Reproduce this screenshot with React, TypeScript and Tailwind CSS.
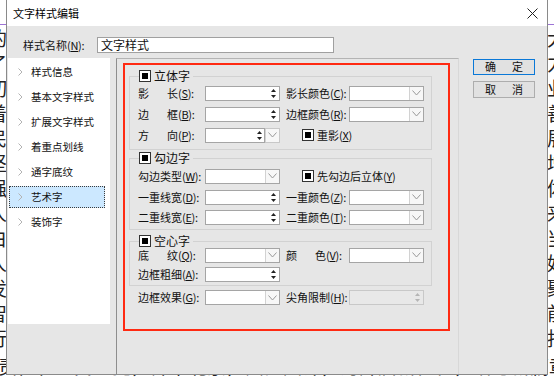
import React from 'react';

const FONT = "font-['Noto_Sans_CJK_SC','Noto_Sans',sans-serif]";

// 对话框两侧露出的文档文字
const EDGE_LINES: [string, string][] = [
  ['的', '大'],
  ['了', '力'],
  ['切', '业'],
  ['着', '善'],
  ['民', '展'],
  ['坚', '增'],
  ['强', '体'],
  ['人', '来'],
  ['白', '当'],
  ['人', '好'],
  ['发', '聚'],
  ['智', '前'],
  ['行', '托'],
];
const LAST_LINE = '责任和人民重托，齐聚北京，共商大计，为开启新征程，谱写新篇章贡献智慧，献良策，家';

function Key({ k, colon = true }: { k: string; colon?: boolean }) {
  return (
    <span className="tracking-[-0.3px]">
      (<span className="underline underline-offset-1">{k}</span>){colon ? ':' : ''}
    </span>
  );
}

function Check({ label, k }: { label: string; k?: string }) {
  return (
    <div className="flex items-center gap-[3px] whitespace-nowrap">
      <div className="flex h-[12px] w-[12px] items-center justify-center border border-[#333] bg-white">
        <div className="h-[6px] w-[6px] bg-black" />
      </div>
      <span>
        {label}
        {k && <Key k={k} colon={false} />}
      </span>
    </div>
  );
}

function SpinArrows({ dim }: { dim?: boolean }) {
  const c = dim ? '#b5b5b5' : '#222';
  return (
    <svg width="7" height="11" viewBox="0 0 7 11" className="shrink-0">
      <path d="M3.5 1 L6 4 L1 4 Z" fill={c} />
      <path d="M3.5 10 L6 7 L1 7 Z" fill={c} />
    </svg>
  );
}

function DropArrow() {
  return (
    <div className="flex h-full w-[14px] shrink-0 items-center justify-center border-l border-[#d2d2d2] bg-[#f7f7f7]">
      <svg width="9" height="6" viewBox="0 0 9 6">
        <polyline points="0.5,0.5 4.5,5 8.5,0.5" fill="none" stroke="#9a9a9a" strokeWidth="1" />
      </svg>
    </div>
  );
}

function Spin({ disabled }: { disabled?: boolean }) {
  return (
    <div
      className={`flex h-[15px] w-[75px] shrink-0 items-center border ${
        disabled ? 'border-[#c8c8c8] bg-[#e8e8e8]' : 'border-[#a5a5a5] bg-white'
      }`}
    >
      <div className="flex-1" />
      <div className="mr-[2px] flex items-center">
        <SpinArrows dim={disabled} />
      </div>
    </div>
  );
}

function Combo() {
  return (
    <div className="flex h-[15px] w-[75px] shrink-0 items-center border border-[#a5a5a5] bg-white">
      <div className="flex-1" />
      <DropArrow />
    </div>
  );
}

function SpinCombo() {
  return (
    <div className="flex h-[15px] w-[75px] shrink-0 items-center">
      <div className="flex h-full flex-1 items-center border border-[#a5a5a5] bg-white">
        <div className="flex-1" />
        <div className="mr-[1px]">
          <SpinArrows />
        </div>
      </div>
      <div className="h-full border-y border-r border-[#c8c8c8]">
        <DropArrow />
      </div>
    </div>
  );
}

function Label({ a, b, k, w = 67 }: { a: string; b?: string; k: string; w?: number }) {
  return (
    <div className="flex shrink-0 items-center whitespace-nowrap" style={{ width: w }}>
      {b ? (
        <>
          <span>{a}</span>
          <span className="ml-[18px]">
            {b}
            <Key k={k} />
          </span>
        </>
      ) : (
        <span>
          {a}
          <Key k={k} />
        </span>
      )}
    </div>
  );
}

function Group({
  title,
  k,
  children,
  className = '',
}: {
  title: string;
  k?: string;
  children: React.ReactNode;
  className?: string;
}) {
  return (
    <div className={`relative ml-[4px] w-[303px] border border-[#d2d2d2] pl-[8px] ${className}`}>
      <div className="absolute -top-[8px] left-[9px] flex h-[14px] items-center bg-[#e6e6e6] pr-[3px] text-[12px]">
        <Check label={title} k={k} />
      </div>
      {children}
    </div>
  );
}

const NAV = ['样式信息', '基本文字样式', '扩展文字样式', '着重点划线', '通字底纹', '艺术字', '装饰字'];

export default function App() {
  return (
    <div className={`relative h-[382px] w-[554px] overflow-hidden bg-white text-[11px] text-[#111] ${FONT}`}>
      {/* 文档背景 */}
      <div className="flex flex-col text-[19px] leading-[25px] text-[#222]">
        <div className="h-[25px] border-b border-[#9d74d6]" />
        {EDGE_LINES.map(([l, r], i) => (
          <div key={i} className="-mx-[12px] flex justify-between">
            <span>{l}</span>
            <span>{r}</span>
          </div>
        ))}
        <div className="-ml-[2px] mt-[3px] whitespace-nowrap">{LAST_LINE}</div>
      </div>

      {/* 对话框 */}
      <div className="absolute left-[6px] top-0 flex h-[375px] w-[542px] flex-col border-x border-b border-[#8a8a8a] bg-[#e6e6e6]">
        {/* 标题栏 */}
        <div className="flex h-[26px] shrink-0 items-center justify-between bg-white pl-[6px] pr-[9px]">
          <span className="text-[11px] text-black">文字样式编辑</span>
          <svg width="11" height="11" viewBox="0 0 11 11">
            <path d="M0.5 0.5 L10.5 10.5 M10.5 0.5 L0.5 10.5" stroke="#222" strokeWidth="1" />
          </svg>
        </div>

        {/* 样式名称 */}
        <div className="mt-[11px] flex items-center pl-[16px]">
          <span className="w-[74px] whitespace-nowrap">
            样式名称<Key k="N" />
          </span>
          <div className="flex h-[16px] w-[237px] items-center border border-[#a0a0a0] bg-white pl-[3px] text-[12px]">
            文字样式
          </div>
        </div>

        {/* 主体 */}
        <div className="mt-[4px] flex flex-1">
          {/* 左侧列表 */}
          <div className="ml-[1px] h-[266px] w-[102px] bg-white pt-[2px] text-[10.5px]">
            {NAV.map((n) => {
              const sel = n === '艺术字';
              return (
                <div key={n} className="flex h-[25px] items-center">
                  <div
                    className={`ml-[1px] flex h-[22px] w-[96px] items-center ${
                      sel ? 'border border-dotted border-[#3b3b3b] bg-[#cce8ff]' : 'border border-transparent'
                    }`}
                  >
                    <svg width="5" height="8" viewBox="0 0 5 8" className="ml-[8px]">
                      <polyline points="0.5,0.5 4,4 0.5,7.5" fill="none" stroke="#b3b3b3" strokeWidth="1" />
                    </svg>
                    <span className="ml-[8px]">{n}</span>
                  </div>
                </div>
              );
            })}
          </div>

          {/* 右侧面板 */}
          <div className="ml-[6px] w-[343px] border-l border-t border-r border-l-[#8e8e8e] border-t-[#b4b4b4] border-r-[#d8d8d8]">
            <div className="ml-[6px] mt-[4px] h-[268px] w-[327px] border-2 border-[#ff2a12]">
              {/* 立体字 */}
              <Group title="立体字" className="mt-[11px] pb-[3px] pt-[6px]">
                <div className="flex h-[21px] items-center">
                  <Label a="影" b="长" k="S" />
                  <Spin />
                  <div className="ml-[6px]">
                    <Label a="影长颜色" k="C" w={63} />
                  </div>
                  <Combo />
                </div>
                <div className="flex h-[21px] items-center">
                  <Label a="边" b="框" k="B" />
                  <Spin />
                  <div className="ml-[6px]">
                    <Label a="边框颜色" k="R" w={63} />
                  </div>
                  <Combo />
                </div>
                <div className="flex h-[21px] items-center">
                  <Label a="方" b="向" k="P" />
                  <SpinCombo />
                  <div className="ml-[22px]">
                    <Check label="重影" k="X" />
                  </div>
                </div>
              </Group>

              {/* 勾边字 */}
              <Group title="勾边字" className="mt-[8px] pb-[1px] pt-[7px]">
                <div className="flex h-[21px] items-center">
                  <Label a="勾边类型" k="W" />
                  <Combo />
                  <div className="ml-[22px]">
                    <Check label="先勾边后立体" k="Y" />
                  </div>
                </div>
                <div className="flex h-[21px] items-center">
                  <Label a="一重线宽" k="D" />
                  <Spin />
                  <div className="ml-[6px]">
                    <Label a="一重颜色" k="Z" w={63} />
                  </div>
                  <Combo />
                </div>
                <div className="flex h-[20px] items-center">
                  <Label a="二重线宽" k="E" />
                  <Spin />
                  <div className="ml-[6px]">
                    <Label a="二重颜色" k="T" w={63} />
                  </div>
                  <Combo />
                </div>
              </Group>

              {/* 空心字 */}
              <Group title="空心字" className="mt-[11px] pb-[1px] pt-[4px]">
                <div className="flex h-[19px] items-center">
                  <Label a="底" b="纹" k="Q" />
                  <Combo />
                  <div className="ml-[6px]">
                    <Label a="颜" b="色" k="V" w={63} />
                  </div>
                  <Combo />
                </div>
                <div className="flex h-[19px] items-center">
                  <Label a="边框粗细" k="A" />
                  <Spin />
                </div>
              </Group>

              <div className="mt-[2px] flex h-[20px] items-center pl-[13px]">
                <Label a="边框效果" k="G" />
                <Combo />
                <div className="ml-[6px]">
                  <Label a="尖角限制" k="H" w={63} />
                </div>
                <Spin disabled />
              </div>
            </div>
          </div>

          {/* 按钮 */}
          <div className="ml-[14px] flex w-[62px] flex-col gap-[6px] pt-[1px]">
            <button className="flex h-[16px] items-center justify-center gap-[16px] border border-[#0a78d7] bg-[#e1e1e1]">
              <span>确</span>
              <span>定</span>
            </button>
            <button className="flex h-[17px] items-center justify-center gap-[16px] border border-[#adadad] bg-[#e1e1e1]">
              <span>取</span>
              <span>消</span>
            </button>
          </div>
        </div>
      </div>
    </div>
  );
}
